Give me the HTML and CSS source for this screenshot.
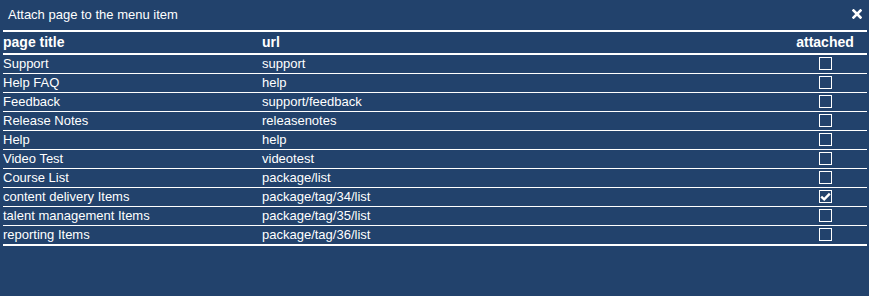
FILE: index.html
```html
<!DOCTYPE html>
<html lang="en">
<head>
<meta charset="utf-8">
<title>Attach page to the menu item</title>
<link rel="stylesheet" href="styles.css">
</head>
<body>
<div class="dialog">
  <div class="titlebar">
    <span class="title">Attach page to the menu item</span>
    <button class="close" aria-label="close">
      <svg width="10" height="10" viewBox="0 0 10 10"><path d="M1.5 1.5 L8.5 8.5 M8.5 1.5 L1.5 8.5" stroke="#fff" stroke-width="2.6" stroke-linecap="square"/></svg>
    </button>
  </div>
  <table class="pages">
    <colgroup><col class="c-title"><col class="c-url"><col class="c-att"></colgroup>
    <thead>
      <tr><th>page title</th><th>url</th><th class="att">attached</th></tr>
    </thead>
    <tbody>
      <tr><td>Support</td><td>support</td><td class="att"><span class="box"></span></td></tr>
      <tr><td>Help FAQ</td><td>help</td><td class="att"><span class="box"></span></td></tr>
      <tr><td>Feedback</td><td>support/feedback</td><td class="att"><span class="box"></span></td></tr>
      <tr><td>Release Notes</td><td>releasenotes</td><td class="att"><span class="box"></span></td></tr>
      <tr><td>Help</td><td>help</td><td class="att"><span class="box"></span></td></tr>
      <tr><td>Video Test</td><td>videotest</td><td class="att"><span class="box"></span></td></tr>
      <tr><td>Course List</td><td>package/list</td><td class="att"><span class="box"></span></td></tr>
      <tr><td>content delivery Items</td><td>package/tag/34/list</td><td class="att"><span class="box checked"><svg width="11" height="11" viewBox="0 0 11 11"><path d="M1.2 5.6 L4.2 8.4 L9.8 2.6" fill="none" stroke="#fff" stroke-width="2.4"/></svg></span></td></tr>
      <tr><td>talent management Items</td><td>package/tag/35/list</td><td class="att"><span class="box"></span></td></tr>
      <tr><td>reporting Items</td><td>package/tag/36/list</td><td class="att"><span class="box"></span></td></tr>
    </tbody>
  </table>
</div>
</body>
</html>
```
FILE: styles.css
```css
html, body {
  margin: 0;
  padding: 0;
  background: #22426c;
}
body {
  font-family: "Liberation Sans", Arial, Helvetica, sans-serif;
  color: #ffffff;
  font-size: 13px;
}
.dialog {
  background: #22426c;
  width: 869px;
  height: 296px;
  box-sizing: border-box;
  padding: 0 2px 0 3px;
}
.titlebar {
  display: flex;
  align-items: center;
  justify-content: space-between;
  height: 30px;
  padding: 0 5px 0 5px;
}
.title {
  font-size: 13px;
  line-height: 30px;
}
.close {
  background: none;
  border: 0;
  padding: 0;
  margin: 0 0 2px 0;
  width: 10px;
  height: 10px;
  display: flex;
  cursor: pointer;
}
.pages {
  width: 100%;
  border-collapse: collapse;
  table-layout: fixed;
}
.c-title { width: 259px; }
.c-att { width: 84px; }
.pages th {
  text-align: left;
  font-weight: bold;
  font-size: 14px;
  height: 21px;
  line-height: 21px;
  padding: 0;
  border-top: 2px solid #fff;
  border-bottom: 2px solid #fff;
}
.pages td {
  height: 18px;
  line-height: 18px;
  padding: 0;
  border-bottom: 1px solid #fff;
  white-space: nowrap;
}
.pages tbody tr:last-child td {
  border-bottom-width: 2px;
}
.pages .att {
  text-align: center;
}
.box {
  display: inline-flex;
  align-items: center;
  justify-content: center;
  width: 13px;
  height: 13px;
  box-sizing: border-box;
  border: 1px solid #fff;
  vertical-align: middle;
  position: relative;
  top: -1px;
}
.box svg {
  display: block;
}
```
